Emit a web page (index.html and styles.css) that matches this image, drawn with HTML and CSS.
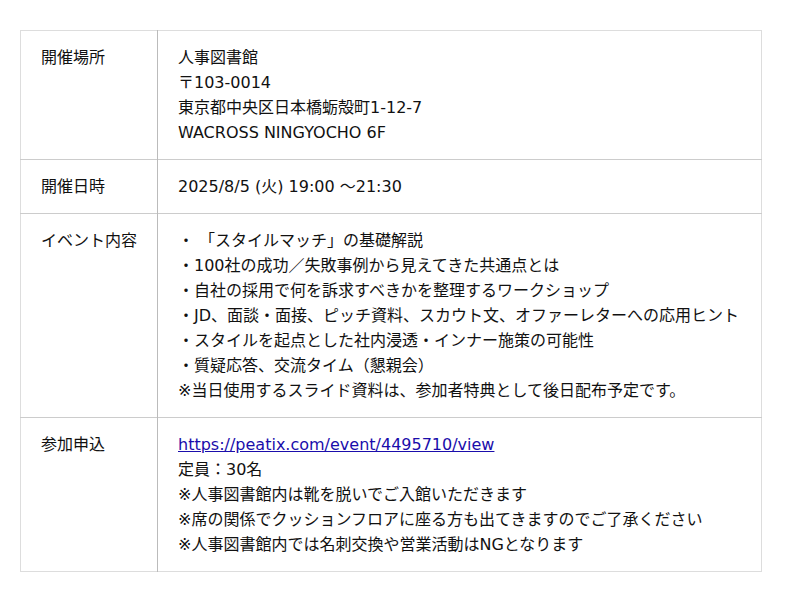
FILE: index.html
```html
<!DOCTYPE html>
<html lang="ja">
<head>
<meta charset="utf-8">
<link rel="stylesheet" href="styles.css">
</head>
<body>
<table class="info">
  <tr>
    <th>開催場所</th>
    <td>人事図書館<br>〒103-0014<br>東京都中央区日本橋蛎殻町1-12-7<br>WACROSS NINGYOCHO 6F</td>
  </tr>
  <tr>
    <th>開催日時</th>
    <td>2025/8/5 (火) 19:00 〜21:30</td>
  </tr>
  <tr>
    <th>イベント内容</th>
    <td>・ 「スタイルマッチ」の基礎解説<br>・100社の成功／失敗事例から見えてきた共通点とは<br>・自社の採用で何を訴求すべきかを整理するワークショップ<br>・JD、面談・面接、ピッチ資料、スカウト文、オファーレターへの応用ヒント<br>・スタイルを起点とした社内浸透・インナー施策の可能性<br>・質疑応答、交流タイム（懇親会）<br>※当日使用するスライド資料は、参加者特典として後日配布予定です。</td>
  </tr>
  <tr>
    <th>参加申込</th>
    <td><a href="https://peatix.com/event/4495710/view">https://peatix.com/event/4495710/view</a><br>定員：30名<br>※人事図書館内は靴を脱いでご入館いただきます<br>※席の関係でクッションフロアに座る方も出てきますのでご了承ください<br>※人事図書館内では名刺交換や営業活動はNGとなります</td>
  </tr>
</table>
</body>
</html>
```
FILE: styles.css
```css
html, body {
  margin: 0;
  padding: 0;
  background: #fff;
}
body {
  padding: 30px 20px;
  font-family: "DejaVu Sans", "Noto Sans CJK JP", sans-serif;
  font-size: 16px;
  line-height: 25px;
  color: #111;
  text-spacing-trim: space-all;
}
.info {
  width: 742px;
  border-collapse: collapse;
  border: 1px solid #ddd;
}
.info th,
.info td {
  text-align: left;
  vertical-align: top;
  font-weight: normal;
  padding: 14px 20px 14px 20px;
  border-top: 1px solid #ccc;
}
.info th {
  width: 96px;
  border-right: 1px solid #bbb;
}
.info tr:first-child th,
.info tr:first-child td {
  border-top: 1px solid #ddd;
}
.info a {
  color: #1a0dab;
}
```
